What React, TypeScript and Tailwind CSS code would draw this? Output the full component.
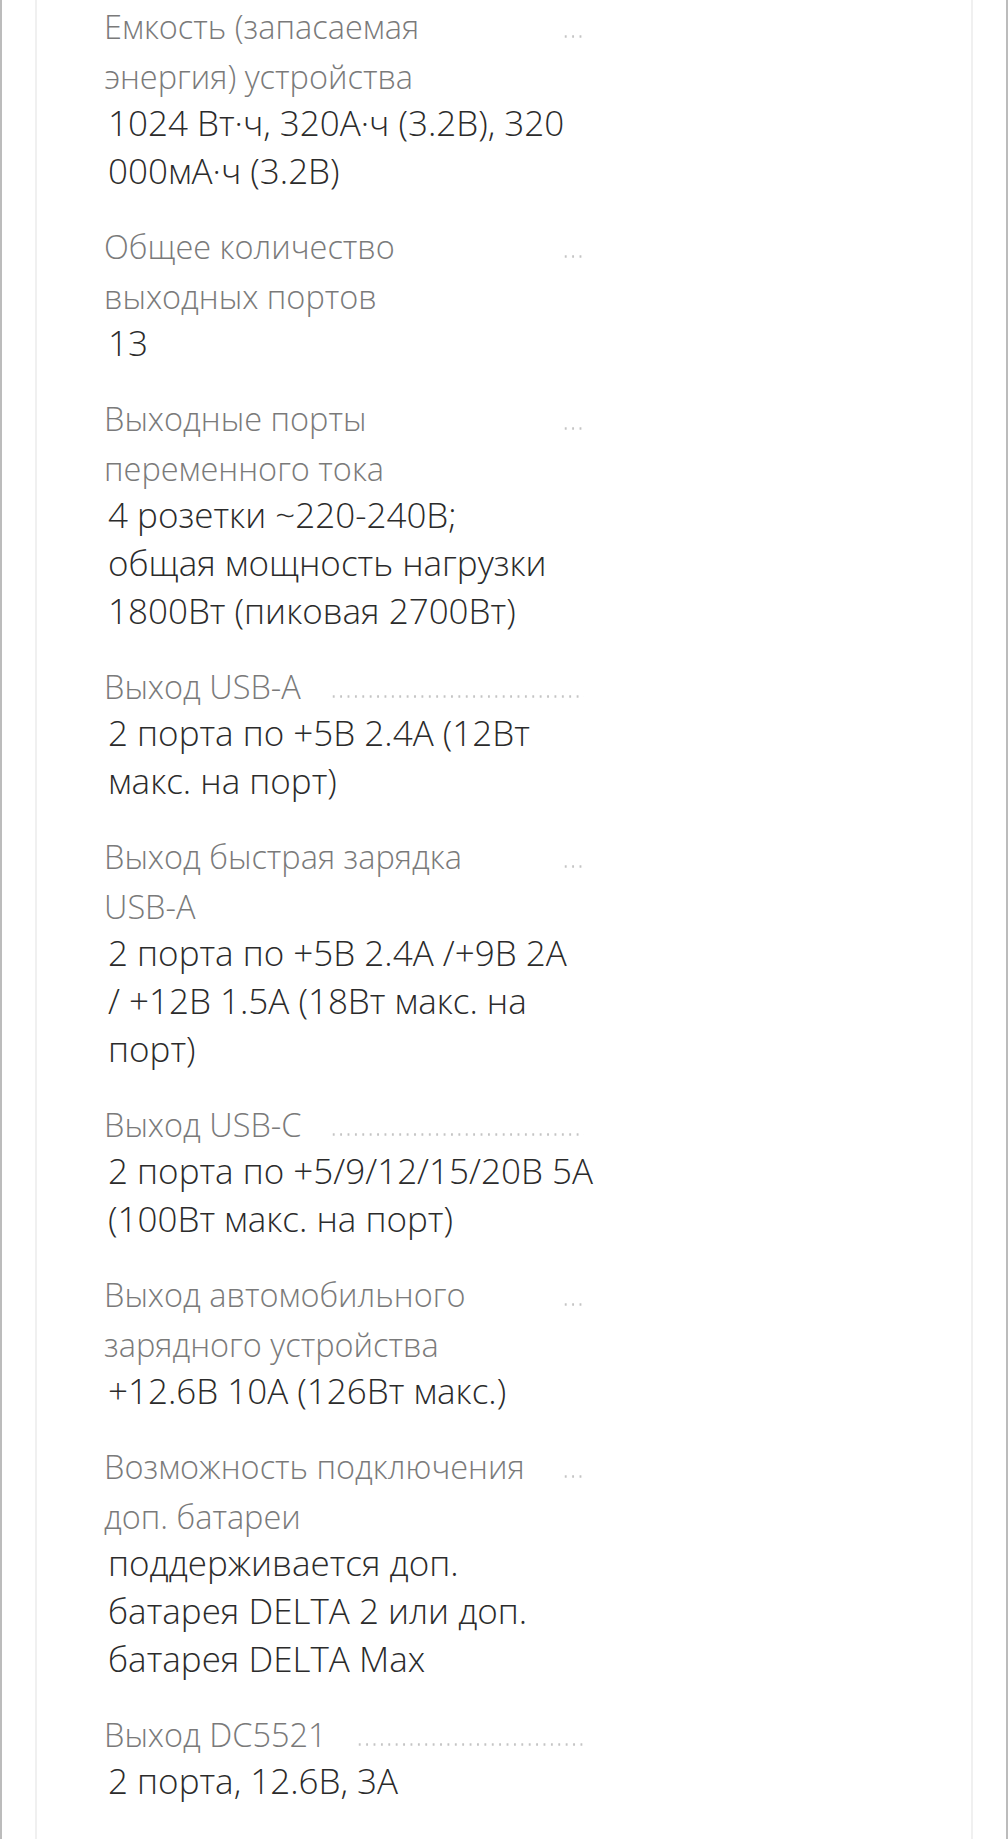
import type { ReactNode } from "react";

type Spec = {
  label: ReactNode;
  value: string[];
};

const specs: Spec[] = [
  {
    label: "Емкость (запасаемая энергия) устройства",
    value: ["1024 Вт·ч, 320А·ч (3.2В), 320", "000мА·ч (3.2В)"],
  },
  { label: "Общее количество выходных портов", value: ["13"] },
  {
    label: "Выходные порты переменного тока",
    value: ["4 розетки ~220-240В;", "общая мощность нагрузки", "1800Вт (пиковая 2700Вт)"],
  },
  { label: "Выход USB-A", value: ["2 порта по +5В 2.4А (12Вт", "макс. на порт)"] },
  {
    label: (
      <>
        Выход быстрая зарядка <span className="whitespace-nowrap">USB-A</span>
      </>
    ),
    value: ["2 порта по +5В 2.4А /+9В 2А", "/ +12В 1.5А (18Вт макс. на", "порт)"],
  },
  { label: "Выход USB-C", value: ["2 порта по +5/9/12/15/20В 5А", "(100Вт макс. на порт)"] },
  { label: "Выход автомобильного зарядного устройства", value: ["+12.6В 10А (126Вт макс.)"] },
  {
    label: "Возможность подключения доп. батареи",
    value: ["поддерживается доп.", "батарея DELTA 2 или доп.", "батарея DELTA Max"],
  },
  { label: "Выход DC5521", value: ["2 порта, 12.6В, 3А"] },
];

export default function App() {
  return (
    <div className="flex min-h-screen border-x-2 border-[#bcbcbc] bg-white pl-[33px] pr-[33px] font-['Open_Sans','Noto_Sans',sans-serif]">
      <div className="flex-1 border-x-2 border-[#f0f0f0] pl-[67px] pt-[2px]">
        <dl className="flex flex-col gap-6">
          {specs.map((spec, i) => (
            <SpecRow key={i} spec={spec} />
          ))}
        </dl>
      </div>
    </div>
  );
}

function SpecRow({ spec }: { spec: Spec }) {
  return (
    <div className="flex flex-col">
      <dt className="flex w-[480px] items-start">
        <span className="max-w-[429px] text-[32.5px] font-[350] leading-[50px] text-[#7a7a7a]">
          {spec.label}
        </span>
        <span
          aria-hidden="true"
          className="ml-[29px] mt-[33px] h-[3px] min-w-[22px] flex-1 bg-[radial-gradient(circle,#c4c4c4_1px,transparent_1.4px)] bg-[length:7.4px_3px] bg-repeat-x"
        />
      </dt>
      <dd className="-mt-[3px] pb-[3px] pl-1 text-[35px] font-[350] leading-[48px] text-[#2b2b2b]">
        {spec.value.map((line) => (
          <span key={line} className="block whitespace-nowrap">
            {line}
          </span>
        ))}
      </dd>
    </div>
  );
}
